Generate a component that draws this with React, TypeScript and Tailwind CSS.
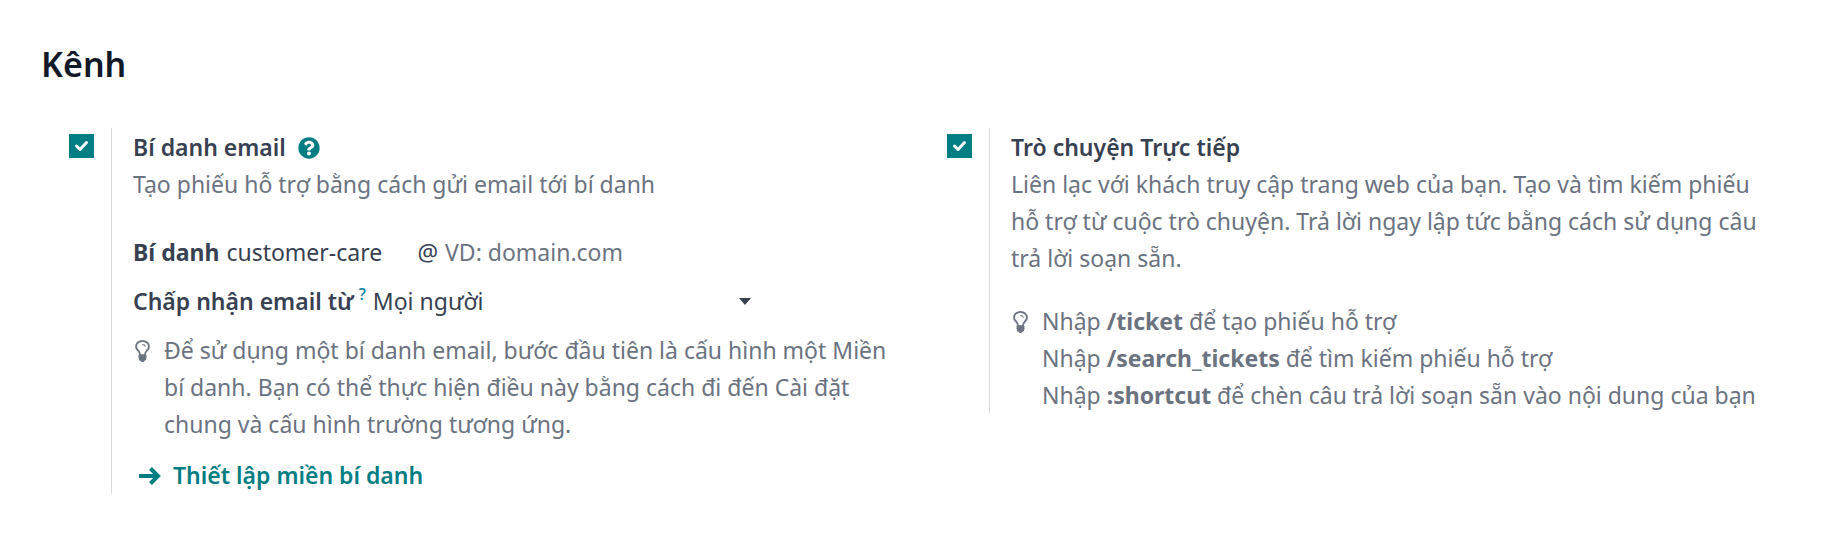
import type { ReactNode } from "react";
import { FaQuestionCircle } from "react-icons/fa";

const LightbulbIcon = () => (
    <svg viewBox="0 128 1024 1536" fill="currentColor" className="mt-2 ml-[2px] h-[22px] w-[15px] shrink-0" aria-hidden="true">
        <path d="M736 576q0 13-9.5 22.5t-22.5 9.5-22.5-9.5-9.5-22.5q0-46-54-71t-106-25q-13 0-22.5-9.5t-9.5-22.5 9.5-22.5 22.5-9.5q50 0 99.5 16t87 54 37.5 90z m160 0q0-72-34.5-134t-90-101.5-123-62-136.5-22.5-136.5 22.5-123 62-90 101.5-34.5 134q0 101 68 180 10 11 30.5 33t30.5 33q128 153 141 298h228q13-145 141-298 10-11 30.5-33t30.5-33q68-79 68-180z m128 0q0 155-103 268-45 49-74.5 87t-59.5 95.5-34 107.5q47 28 47 82 0 37-25 64 25 27 25 64 0 52-45 81 13 23 13 47 0 46-31.5 71t-77.5 25q-20 44-60 70t-87 26-87-26-60-70q-46 0-77.5-25t-31.5-71q0-24 13-47-45-29-45-81 0-37 25-64-25-27-25-64 0-54 47-82-4-50-34-107.5t-59.5-95.5-74.5-87q-103-113-103-268 0-99 44.5-184.5t117-142 164-89 186.5-32.5 186.5 32.5 164 89 117 142 44.5 184.500z" />
    </svg>
);

const ArrowIcon = () => (
    <svg viewBox="0 0 22 18" fill="none" stroke="currentColor" strokeWidth="4" className="h-[18px] w-[22px]" aria-hidden="true">
        <path d="M0 9h19M11.5 1.500l7.500 7.500-7.500 7.500" />
    </svg>
);

interface SettingProps {
    id: string;
    title: string;
    help?: ReactNode;
    children: ReactNode;
}

const Setting = ({ id, title, help, children }: SettingProps) => {
    return (
        <div className="flex items-start pl-[33px]">
            <div className="relative mt-[6px] h-6 w-[25px] shrink-0">
                <input id={id} type="checkbox" defaultChecked className="peer block h-full w-full appearance-none border border-[#017e84] checked:bg-[#017e84]" />
                <svg viewBox="0 0 25 24" fill="none" stroke="white" strokeWidth="3" strokeLinecap="round" strokeLinejoin="round" className="pointer-events-none absolute inset-0 opacity-0 peer-checked:opacity-100" aria-hidden="true">
                    <path d="M7.5 12l3.5 3.5 6.5-7" />
                </svg>
            </div>
            <div className="ml-[17px] min-w-0 flex-1 border-l border-[#d8dadd] pt-px pl-[21px]">
                <div className="flex items-center gap-3">
                    <label htmlFor={id} className="font-semibold text-[#374151]">{title}</label>
                    {help}
                </div>
                {children}
            </div>
        </div>
    );
};

export default function App() {
    return (
        <main className="bg-white px-9 pt-[41px] pb-12 font-['Noto_Sans',sans-serif] text-[23px] leading-[37px] text-[#6b7280]">
            <h2 className="pl-[5px] text-[34px] leading-[47px] font-semibold text-[#111827]">Kênh</h2>
            <div className="mt-10 grid grid-cols-2 items-start">
                <Setting
                    id="email-alias"
                    title="Bí danh email"
                    help={
                        <button type="button" aria-label="Trợ giúp" className="text-[#017e84]">
                            <FaQuestionCircle className="size-[22px]" />
                        </button>
                    }
                >
                    <p>Tạo phiếu hỗ trợ bằng cách gửi email tới bí danh</p>
                    <div className="mt-[31px] flex items-center text-[#374151]">
                        <label htmlFor="alias" className="font-bold">Bí danh</label>
                        <input id="alias" type="text" defaultValue="customer-care" className="ml-[7px] w-[191px]" />
                        <label htmlFor="domain">@</label>
                        <input id="domain" type="text" placeholder="VD: domain.com" className="ml-[7px] w-[200px] placeholder:text-[#6b7280]" />
                    </div>
                    <div className="mt-3 flex items-center text-[#374151]">
                        <label htmlFor="accept-from" className="font-semibold">
                            Chấp nhận email từ
                        </label>
                        <sup className="ml-[5px] text-[16px] font-medium text-[#0180a5]">?</sup>
                        <div className="relative ml-[7px] w-[382px]">
                            <select id="accept-from" className="block w-full appearance-none">
                                <option>Mọi người</option>
                            </select>
                            <svg viewBox="0 0 12 7" fill="currentColor" className="pointer-events-none absolute top-[15px] right-1 h-[7px] w-3" aria-hidden="true">
                                <path d="M0 0h12l-6 7z" />
                            </svg>
                        </div>
                    </div>
                    <div className="mt-3 flex items-start gap-[14px]">
                        <LightbulbIcon />
                        <p>
                            Để sử dụng một bí danh email, bước đầu tiên là cấu hình một Miền<br />
                            bí danh. Bạn có thể thực hiện điều này bằng cách đi đến Cài đặt<br />
                            chung và cấu hình trường tương ứng.
                        </p>
                    </div>
                    <a href="#" className="mt-[14px] flex items-center gap-3 pl-[6px] font-semibold text-[#017e84]">
                        <ArrowIcon />
                        Thiết lập miền bí danh
                    </a>
                </Setting>
                <Setting id="live-chat" title="Trò chuyện Trực tiếp">
                    <p>
                        Liên lạc với khách truy cập trang web của bạn. Tạo và tìm kiếm phiếu<br />
                        hỗ trợ từ cuộc trò chuyện. Trả lời ngay lập tức bằng cách sử dụng câu<br />
                        trả lời soạn sẵn.
                    </p>
                    <div className="mt-[26px] flex items-start gap-[14px]">
                        <LightbulbIcon />
                        <p>
                            Nhập <b>/ticket</b> để tạo phiếu hỗ trợ<br />
                            Nhập <b>/search_tickets</b> để tìm kiếm phiếu hỗ trợ<br />
                            Nhập <b>:shortcut</b> để chèn câu trả lời soạn sẵn vào nội dung của bạn
                        </p>
                    </div>
                </Setting>
            </div>
        </main>
    );
}
